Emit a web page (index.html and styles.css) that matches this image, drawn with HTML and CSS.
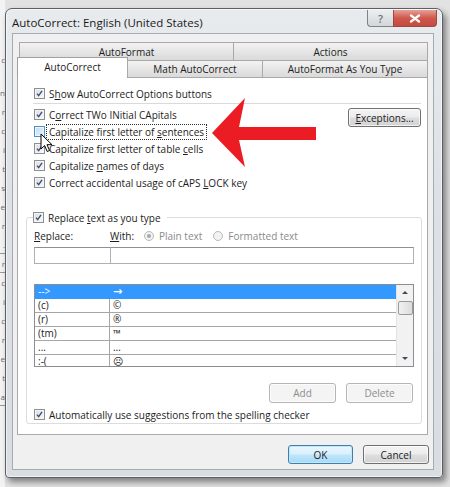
FILE: index.html
```html
<!DOCTYPE html>
<html lang="en">
<head>
    <meta charset="UTF-8">
    <meta name="viewport" content="width=device-width, initial-scale=1.0">
    <title>AutoCorrect: English (United States)</title>
    <link rel="stylesheet" href="styles.css">
</head>
<body>
    <div class="desk">
        <!-- edge of the document window behind the dialog -->
        <div class="doc-edge">
            <div class="doc-line" style="height:50px"></div>
            <div class="doc-line">c</div>
            <div class="doc-line gap"></div>
            <div class="doc-line">n</div>
            <div class="doc-line">r</div>
            <div class="doc-line">c</div>
            <div class="doc-line">i</div>
            <div class="doc-line">t</div>
            <div class="doc-line">s</div>
            <div class="doc-line">e</div>
            <div class="doc-line">r</div>
            <div class="doc-line rule">.</div>
            <div class="doc-line rule">r</div>
            <div class="doc-line">c</div>
            <div class="doc-line">i</div>
            <div class="doc-line">c</div>
            <div class="doc-line">r</div>
            <div class="doc-line">e</div>
            <div class="doc-line">t</div>
            <div class="doc-line rule">a</div>
        </div>

        <div class="dialog">
            <div class="titlebar">
                <span class="title">AutoCorrect: English (United States)</span>
                <div class="caption-buttons">
                    <span class="cap-btn help">?</span>
                    <span class="cap-btn close">
                        <svg width="12" height="9" viewBox="0 0 12 9"><path d="M2 1.5l8 6M10 1.5l-8 6"/></svg>
                    </span>
                </div>
            </div>

            <div class="client">
                <div class="tabs">
                    <div class="tab-row back">
                        <span class="tab w-format">AutoFormat</span>
                        <span class="tab w-actions">Actions</span>
                    </div>
                    <div class="tab-row front">
                        <span class="tab active w-correct">AutoCorrect</span>
                        <span class="tab w-math">Math AutoCorrect</span>
                        <span class="tab w-type">AutoFormat As You Type</span>
                    </div>
                </div>

                <div class="panel">
                    <div class="opt">
                        <span class="check on"><svg viewBox="0 0 11 11"><path d="M2.4 5.6l2.1 2.6 4.1-5.8"/></svg></span>
                        <span class="label">S<u>h</u>ow AutoCorrect Options buttons</span>
                    </div>
                    <div class="separator"></div>

                    <div class="options">
                        <div class="option-list">
                            <div class="opt">
                                <span class="check on"><svg viewBox="0 0 11 11"><path d="M2.4 5.6l2.1 2.6 4.1-5.8"/></svg></span>
                                <span class="label">C<u>o</u>rrect TWo INitial CApitals</span>
                            </div>
                            <div class="opt">
                                <span class="check hover"></span>
                                <span class="label focused">Capitalize first letter of <u>s</u>entences</span>
                            </div>
                            <div class="opt">
                                <span class="check on"><svg viewBox="0 0 11 11"><path d="M2.4 5.6l2.1 2.6 4.1-5.8"/></svg></span>
                                <span class="label">Capitalize first letter of table <u>c</u>ells</span>
                            </div>
                            <div class="opt">
                                <span class="check on"><svg viewBox="0 0 11 11"><path d="M2.4 5.6l2.1 2.6 4.1-5.8"/></svg></span>
                                <span class="label">Capitalize <u>n</u>ames of days</span>
                            </div>
                            <div class="opt">
                                <span class="check on"><svg viewBox="0 0 11 11"><path d="M2.4 5.6l2.1 2.6 4.1-5.8"/></svg></span>
                                <span class="label">Correct accidental usage of cAPS <u>L</u>OCK key</span>
                            </div>
                        </div>
                        <button class="btn exceptions"><u>E</u>xceptions...</button>
                    </div>

                    <fieldset class="group">
                        <legend class="opt">
                            <span class="check on"><svg viewBox="0 0 11 11"><path d="M2.4 5.6l2.1 2.6 4.1-5.8"/></svg></span>
                            <span class="label">Replace <u>t</u>ext as you type</span>
                        </legend>

                        <div class="replace-head">
                            <span class="col-replace"><u>R</u>eplace:</span>
                            <span class="col-with"><u>W</u>ith:</span>
                            <span class="radio on"></span>
                            <span class="radio-label">Plain text</span>
                            <span class="radio"></span>
                            <span class="radio-label">Formatted text</span>
                        </div>

                        <div class="replace-inputs">
                            <span class="field field-replace"></span>
                            <span class="field field-with"></span>
                        </div>

                        <div class="entries">
                            <div class="entry-rows">
                                <div class="entry selected"><span class="key">--&gt;</span><span class="val arrow-glyph">&#8594;</span></div>
                                <div class="entry"><span class="key">(c)</span><span class="val">&#169;</span></div>
                                <div class="entry"><span class="key">(r)</span><span class="val">&#174;</span></div>
                                <div class="entry"><span class="key">(tm)</span><span class="val">&#8482;</span></div>
                                <div class="entry"><span class="key">...</span><span class="val">&#8230;</span></div>
                                <div class="entry"><span class="key">:-(</span><span class="val">&#9785;</span></div>
                            </div>
                            <div class="scrollbar">
                                <span class="arrow up"></span>
                                <span class="thumb"></span>
                                <span class="track"></span>
                                <span class="arrow down"></span>
                            </div>
                        </div>

                        <div class="entry-actions">
                            <button class="btn" disabled>Add</button>
                            <button class="btn" disabled>Delete</button>
                        </div>

                        <div class="opt">
                            <span class="check on"><svg viewBox="0 0 11 11"><path d="M2.4 5.6l2.1 2.6 4.1-5.8"/></svg></span>
                            <span class="label">Automatically use suggestions from the spelling checker</span>
                        </div>
                    </fieldset>
                </div>

                <div class="footer">
                    <button class="btn default">OK</button>
                    <button class="btn cancel">Cancel</button>
                </div>
            </div>
        </div>
    </div>

    <!-- pointer resting on the sentences checkbox -->
    <svg class="pointer" width="13" height="20" viewBox="0 0 13 20">
        <path d="M1 1v15l3.6-3.4 2.6 5.9 2.4-1-2.6-5.8h5z" fill="#fff" stroke="#000" stroke-width="1" stroke-linejoin="round"/>
    </svg>

    <!-- red call-out arrow -->
    <svg class="callout" width="108" height="72" viewBox="0 0 108 72">
        <path d="M1 37 L34 2 L28 31 L105 31 L105 44 L28 44 L34 71 Z" fill="#ec1c24"/>
    </svg>
</body>
</html>
```

FILE: styles.css
```css
* {
    box-sizing: border-box;
}

body {
    margin: 0;
    width: 450px;
    height: 487px;
    overflow: hidden;
    position: relative;
    background: #e2e2e2;
    font-family: 'Open Sans', 'Noto Sans', sans-serif;
    font-size: 10px;
    color: #1c1c1c;
}

u {
    text-decoration-thickness: 1px;
    text-underline-offset: 1px;
}

.desk {
    display: flex;
    height: 100%;
}

/* document window peeking out on the left */
.doc-edge {
    width: 5px;
    flex-shrink: 0;
    overflow: hidden;
    background: #f3f3f3;
    color: #6a6a6a;
    font-size: 8px;
}

.doc-line {
    display: flex;
    justify-content: flex-end;
    height: 19px;
    line-height: 19px;
    white-space: nowrap;
}

.doc-line.gap {
    height: 14px;
}

.doc-line.rule {
    border-bottom: 1px solid #9a9a9a;
}

/* dialog window */
.dialog {
    margin-top: 8px;
    width: 438px;
    height: 470px;
    display: flex;
    flex-direction: column;
    padding: 0 8px 7px 6px;
    border: 1px solid #5b6067;
    border-radius: 7px 7px 4px 4px;
    background: linear-gradient(#e8ebee, #dde1e5 40%, #d9dde2);
    box-shadow: 3px 4px 6px rgba(0, 0, 0, 0.45), 0 0 0 1px rgba(255, 255, 255, 0.6) inset;
}

.titlebar {
    height: 24px;
    display: flex;
    justify-content: space-between;
    align-items: flex-start;
}

.title {
    font-size: 11.5px;
    line-height: 28px;
    color: #1a1a1a;
}

.caption-buttons {
    display: flex;
    margin-top: 1px;
    margin-right: -3px;
}

.cap-btn {
    height: 17px;
    display: flex;
    align-items: center;
    justify-content: center;
    border: 1px solid #7d828a;
    border-top: none;
}

.help {
    width: 26px;
    border-radius: 0 0 0 4px;
    border-right: none;
    background: linear-gradient(#eceef0, #d3d6da);
    color: #6d7178;
    font-size: 11px;
    font-weight: 600;
}

.close {
    width: 44px;
    border-radius: 0 0 4px 0;
    border-color: #9a4a42;
    background: linear-gradient(#e8a097, #d0584b 50%, #c24a3e);
}

.close svg path {
    stroke: #fff;
    stroke-width: 2.2;
    stroke-linecap: round;
}

.client {
    flex: 1;
    display: flex;
    flex-direction: column;
    padding: 8px 5px 0 4px;
    background: #f0f0f0;
    border: 1px solid #a6abb2;
}

/* tabs */
.tab-row {
    display: flex;
}

.tab-row.back {
    margin-left: 2px;
    height: 18px;
}

.tab-row.front {
    height: 17px;
    position: relative;
    z-index: 1;
}

.tab {
    display: flex;
    align-items: center;
    justify-content: center;
    border: 1px solid #a9a9a9;
    border-bottom: none;
    margin-left: -1px;
    background: linear-gradient(#f3f3f3, #e6e6e6 50%, #dadada);
    line-height: 14px;
}

.tab:first-child {
    margin-left: 0;
}

.w-format { width: 215px; }
.w-actions { width: 195px; }
.w-correct { width: 111px; }
.w-math { width: 136px; }
.w-type { width: 166px; }

.tab.active {
    background: #fff;
    margin-top: -3px;
    height: 21px;
    padding-bottom: 3px;
    border-color: #a0a0a0;
}

/* tab page */
.panel {
    height: 358px;
    display: flex;
    flex-direction: column;
    padding: 7px 6px 0 16px;
    background: #fff;
    border: 1px solid #a9a9a9;
}

.opt {
    display: flex;
    align-items: center;
    height: 17px;
    gap: 1px;
}

.label {
    padding: 0 2px;
    border: 1px solid transparent;
    line-height: 14px;
    white-space: nowrap;
}

.label.focused {
    border: 1px dotted #2a2a2a;
}

.check {
    width: 11px;
    height: 11px;
    flex-shrink: 0;
    border: 1px solid #8e8f8f;
    background: linear-gradient(135deg, #dcdcdc, #fbfbfb);
    box-shadow: 0 0 0 1px #f4f4f4 inset;
}

.check svg {
    display: block;
    width: 9px;
    height: 9px;
}

.check svg path {
    fill: none;
    stroke: #3c4f80;
    stroke-width: 1.7;
}

.check.hover {
    border-color: #4d8fc7;
    background: linear-gradient(135deg, #bcdcf6, #e8f4fc);
}

.separator {
    height: 1px;
    margin: 1px 0 2px -1px;
    background: #dadada;
}

.options {
    display: flex;
    justify-content: space-between;
    align-items: flex-start;
}

/* buttons */
.btn {
    font: inherit;
    color: #1c1c1c;
    height: 19px;
    padding: 0;
    border: 1px solid #707070;
    border-radius: 3px;
    background: linear-gradient(#f4f4f4, #ececec 48%, #dedede 52%, #d2d2d2);
    box-shadow: 0 0 0 1px rgba(255, 255, 255, 0.7) inset;
}

.btn:disabled {
    color: #8d8d8d;
    border-color: #b5b5b5;
    background: #f4f4f4;
}

.exceptions {
    width: 73px;
    margin-top: 2px;
}

/* replace group */
.group {
    margin: 18px -1px 0 -8px;
    padding: 0 7px;
    border: 1px solid #dcdcdc;
    border-radius: 3px;
    min-width: 0;
}

.group legend {
    padding: 0 3px 0 0;
    margin-left: -1px;
}

.replace-head {
    display: flex;
    align-items: center;
    height: 14px;
    margin-top: 3px;
}

.col-replace {
    width: 76px;
}

.col-with {
    width: 34px;
}

.radio {
    width: 10px;
    height: 10px;
    border-radius: 50%;
    border: 1px solid #b9b9b9;
    background: #f2f2f2;
    display: flex;
    align-items: center;
    justify-content: center;
}

.radio.on::after {
    content: '';
    width: 4px;
    height: 4px;
    border-radius: 50%;
    background: #a8a8a8;
}

.radio-label {
    color: #8a8a8a;
    margin: 0 11px 0 5px;
}

.replace-inputs {
    display: flex;
    margin-top: 4px;
    height: 17px;
}

.field {
    border: 1px solid #adb0b6;
    border-top-color: #8c8f95;
    background: #fff;
}

.field-replace {
    width: 77px;
}

.field-with {
    flex: 1;
    margin-left: -1px;
}

.entries {
    margin-top: 20px;
    height: 83px;
    display: flex;
    border: 1px solid #8a8d94;
    overflow: hidden;
}

.entry-rows {
    flex: 1;
}

.entry {
    display: flex;
    height: 14px;
    line-height: 13px;
    border-bottom: 1px solid #a6a6a6;
}

.entry .key {
    width: 75px;
    padding-left: 3px;
    border-right: 1px solid #a6a6a6;
}

.entry .val {
    padding-left: 3px;
}

.entry .arrow-glyph {
    font-family: 'DejaVu Sans', sans-serif;
    font-size: 11px;
    font-weight: bold;
}

.entry.selected {
    background: #3399ff;
    color: #fff;
    border-bottom-color: #3399ff;
}

.entry.selected .key {
    border-right-color: #3399ff;
}

.scrollbar {
    width: 17px;
    display: flex;
    flex-direction: column;
    align-items: center;
    background: #f2f2f2;
    border-left: 1px solid #e4e4e4;
}

.arrow {
    height: 15px;
    width: 100%;
    display: flex;
    align-items: center;
    justify-content: center;
}

.arrow::after {
    content: '';
    border-left: 3px solid transparent;
    border-right: 3px solid transparent;
}

.arrow.up::after {
    border-bottom: 3px solid #4a4a4a;
}

.arrow.down::after {
    border-top: 3px solid #4a4a4a;
}

.thumb {
    width: 15px;
    height: 14px;
    margin-top: 1px;
    border: 1px solid #9a9a9a;
    border-radius: 2px;
    background: linear-gradient(90deg, #f1f1f1, #dcdcdc);
}

.track {
    flex: 1;
}

.entry-actions {
    display: flex;
    justify-content: flex-end;
    gap: 10px;
    margin-top: 16px;
    padding-right: 1px;
}

.entry-actions .btn {
    width: 67px;
    height: 20px;
}

.group > .opt {
    margin-top: 3px;
}

/* dialog buttons */
.footer {
    display: flex;
    justify-content: flex-end;
    gap: 10px;
    margin-top: 10px;
    margin-right: -1px;
}

.default {
    width: 65px;
    border-color: #3c7fb1;
    box-shadow: 0 0 0 1px #c3e6f9 inset;
    background: linear-gradient(#eaf6fd, #d9f0fc 48%, #bee6fd 52%, #a7d9f5);
}

.cancel {
    width: 66px;
}

/* overlays */
.pointer {
    position: absolute;
    left: 40px;
    top: 133px;
}

.callout {
    position: absolute;
    left: 211px;
    top: 96px;
}
```
